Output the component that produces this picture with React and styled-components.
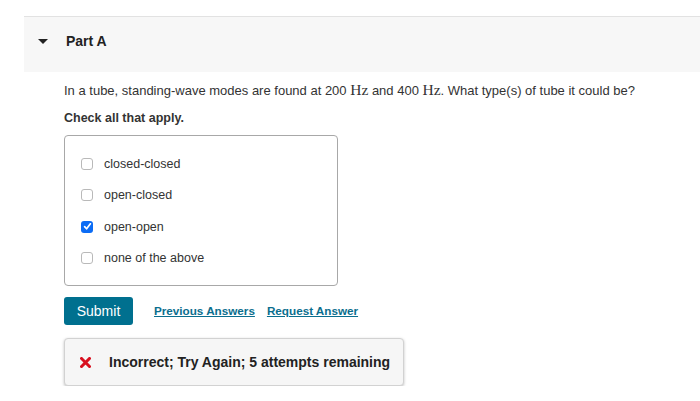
import React from "react";
import styled, { createGlobalStyle } from "styled-components";

const GlobalStyle = createGlobalStyle`
  body {
    margin: 0;
    background: #ffffff;
    font-family: "Liberation Sans", Arial, sans-serif;
    color: #333333;
  }
`;

const Page = styled.div`
  padding: 16px 0 0 24px;
  width: 700px;
  box-sizing: border-box;
`;

const PartHeader = styled.div`
  display: flex;
  align-items: center;
  height: 56px;
  border-top: 1px solid #e2e2e2;
  background: #f7f7f7;
  padding: 0 0 7px 14px;
  box-sizing: border-box;
`;

const Caret = styled.span`
  width: 0;
  height: 0;
  border-left: 5px solid transparent;
  border-right: 5px solid transparent;
  border-top: 5.5px solid #222;
  margin-right: 18px;
`;

const PartTitle = styled.h2`
  margin: 0;
  font-size: 14px;
  font-weight: bold;
  color: #222;
`;

const Body = styled.div`
  padding-left: 40px;
`;

const Question = styled.p`
  margin: 9px 0 0;
  font-size: 13px;
  line-height: 18px;
  color: #333;
`;

const Math = styled.span`
  font-family: "Liberation Serif", "Times New Roman", serif;
  font-size: 15.5px;
`;

const Instruction = styled.p`
  margin: 9px 0 0;
  font-size: 12.5px;
  line-height: 18px;
  font-weight: bold;
  color: #333;
`;

const OptionBox = styled.div`
  margin-top: 8px;
  width: 274px;
  height: 151px;
  box-sizing: border-box;
  border: 1px solid #a8a8a8;
  border-radius: 4px;
  padding: 12px 0 0 16px;
  display: flex;
  flex-direction: column;
`;

const Option = styled.label`
  display: flex;
  align-items: center;
  height: 31.5px;
  font-size: 12.5px;
  color: #333;
`;

const Box = styled.span`
  width: 12px;
  height: 12px;
  box-sizing: border-box;
  border-radius: 3px;
  margin-right: 11px;
  display: flex;
  align-items: center;
  justify-content: center;
  border: ${(p) => (p.$checked ? "none" : "1px solid #b9b9b9")};
  background: ${(p) => (p.$checked ? "#0b6cf5" : "#fff")};
`;

const Actions = styled.div`
  display: flex;
  align-items: center;
  margin-top: 11px;
`;

const SubmitButton = styled.button`
  width: 69px;
  height: 28px;
  border: none;
  border-radius: 3px;
  background: #00708f;
  color: #fff;
  font-family: "Liberation Sans", Arial, sans-serif;
  font-size: 14px;
  padding: 0;
  margin-right: 21px;
`;

const LinkButton = styled.a`
  font-size: 11.7px;
  font-weight: bold;
  color: #0b6e8e;
  text-decoration: underline;
  margin-right: 12px;
  margin-top: -2px;
`;

const Feedback = styled.div`
  margin-top: 13px;
  width: 340px;
  height: 48px;
  box-sizing: border-box;
  border: 1px solid #d2d2d2;
  border-radius: 4px;
  background: #f6f6f6;
  box-shadow: 0 1px 3px rgba(0, 0, 0, 0.25);
  display: flex;
  align-items: center;
  padding-left: 15px;
`;

const FeedbackText = styled.span`
  font-size: 14px;
  font-weight: bold;
  color: #222;
  margin-left: 18px;
`;

const CheckMark = () => (
  <svg width="9" height="9" viewBox="0 0 9 9">
    <path d="M1.6 4.6 L3.6 6.8 L7.4 1.8" fill="none" stroke="#fff" strokeWidth="1.7" strokeLinecap="round" strokeLinejoin="round" />
  </svg>
);

const CrossIcon = () => (
  <svg width="11" height="11" viewBox="0 0 11 11">
    <path d="M1.5 1.5 L9.5 9.5 M9.5 1.5 L1.5 9.5" stroke="#d8101f" strokeWidth="3" strokeLinecap="square" />
  </svg>
);

const options = [
  { label: "closed-closed", checked: false },
  { label: "open-closed", checked: false },
  { label: "open-open", checked: true },
  { label: "none of the above", checked: false },
];

const App = () => {
  return (
    <Page>
      <GlobalStyle />
      <PartHeader>
        <Caret />
        <PartTitle>Part A</PartTitle>
      </PartHeader>
      <Body>
        <Question>
          In a tube, standing-wave modes are found at 200 <Math>Hz</Math> and 400 <Math>Hz</Math>. What type(s) of tube it could be?
        </Question>
        <Instruction>Check all that apply.</Instruction>
        <OptionBox>
          {options.map((o) => (
            <Option key={o.label}>
              <Box $checked={o.checked}>{o.checked && <CheckMark />}</Box>
              {o.label}
            </Option>
          ))}
        </OptionBox>
        <Actions>
          <SubmitButton>Submit</SubmitButton>
          <LinkButton>Previous Answers</LinkButton>
          <LinkButton>Request Answer</LinkButton>
        </Actions>
        <Feedback>
          <CrossIcon />
          <FeedbackText>Incorrect; Try Again; 5 attempts remaining</FeedbackText>
        </Feedback>
      </Body>
    </Page>
  );
};

export default App;
